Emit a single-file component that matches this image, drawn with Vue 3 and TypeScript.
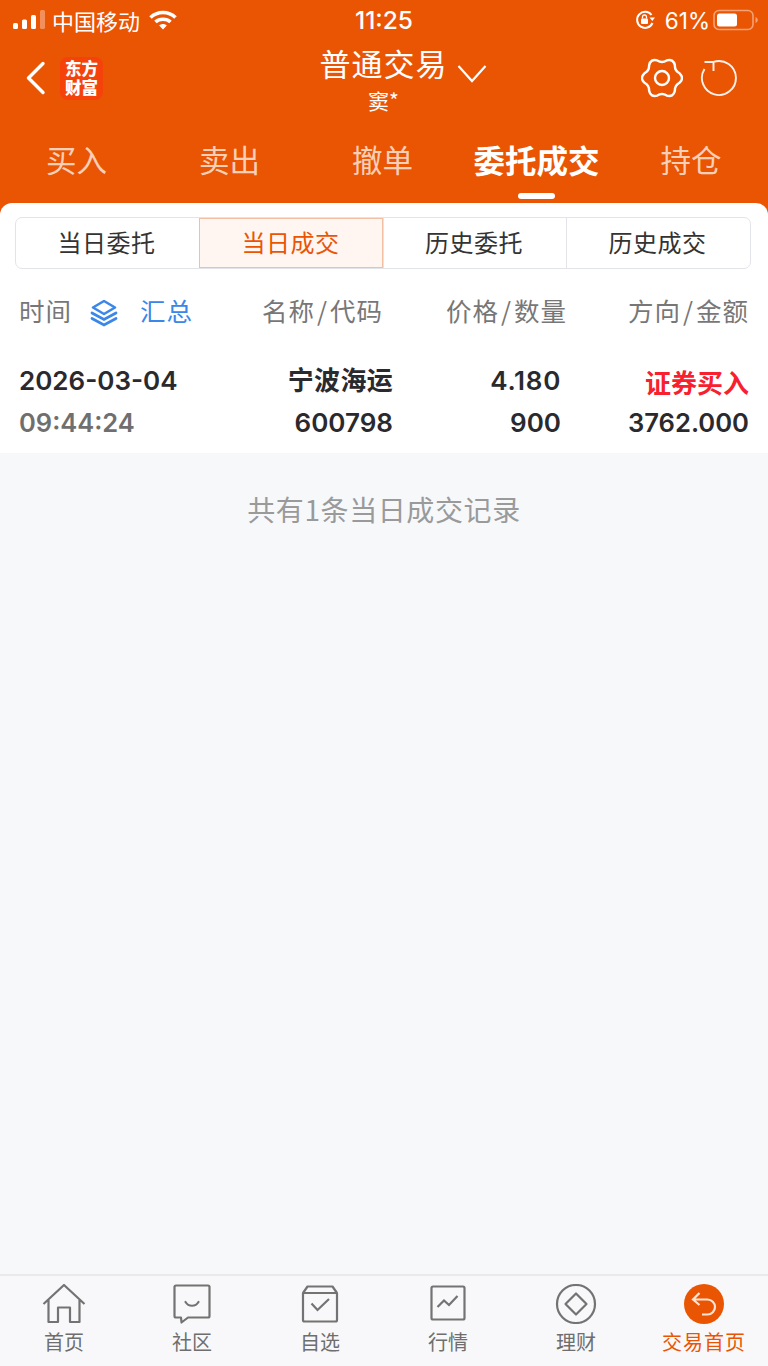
<script setup lang="ts">
const tabs = [
  { label: '买入', active: false },
  { label: '卖出', active: false },
  { label: '撤单', active: false },
  { label: '委托成交', active: true },
  { label: '持仓', active: false },
]
const segments = [
  { label: '当日委托', active: false },
  { label: '当日成交', active: true },
  { label: '历史委托', active: false },
  { label: '历史成交', active: false },
]
const heads = [
  { a: '名称', b: '代码', cls: 'c2' },
  { a: '价格', b: '数量', cls: 'c3' },
  { a: '方向', b: '金额', cls: 'c4' },
]

function polar(deg: number, r: number): string {
  const t = (deg * Math.PI) / 180
  return `${(21 + r * Math.cos(t)).toFixed(2)} ${(21 + r * Math.sin(t)).toFixed(2)}`
}
function gearPath(): string {
  let d = `M${polar(-15, 18.2)}`
  for (let i = 0; i < 6; i++) {
    const a = i * 60
    d += `Q${polar(a, 22.5)} ${polar(a + 15, 18.2)}`
    d += `Q${polar(a + 30, 14.6)} ${polar(a + 45, 18.2)}`
  }
  return d + 'Z'
}
const gear = gearPath()
</script>

<template>
  <div class="page">
    <header class="top">
      <div class="status">
        <div class="status-left">
          <svg class="signal" width="34" height="20" viewBox="0 0 34 20">
            <rect x="0" y="13" width="5" height="6" rx="1.5" fill="#fff" />
            <rect x="9" y="9.5" width="5" height="9.5" rx="1.5" fill="#fff" />
            <rect x="18" y="5" width="5" height="14" rx="1.5" fill="#fff" />
            <rect x="27" y="0" width="5" height="19" rx="1.5" fill="#fff" opacity=".35" />
          </svg>
          <span class="carrier">中国移动</span>
          <svg class="wifi" width="28" height="20" viewBox="0 0 28 20">
            <path d="M1.5 7.5C8.5 .8 19.5 .8 26.5 7.5" fill="none" stroke="#fff" stroke-width="3.6" />
            <path d="M6.5 12C10.5 8.3 17.5 8.3 21.5 12" fill="none" stroke="#fff" stroke-width="3.6" />
            <path d="M10.2 15.5C12.3 13.5 15.7 13.5 17.8 15.5L14 19.5Z" fill="#fff" />
          </svg>
        </div>
        <div class="clock">11:25</div>
        <div class="status-right">
          <svg width="22" height="22" viewBox="0 0 22 22">
            <path d="M17.5 6A8 8 0 1 0 18.5 14" fill="none" stroke="#fff" stroke-width="2" />
            <path d="M15.5 8.5h5.5l-2.7 3.5Z" fill="#fff" />
            <rect x="7" y="9.5" width="7" height="5.5" rx="1" fill="#fff" />
            <path d="M8.5 9.5V8a2 2 0 0 1 4 0v1.5" fill="none" stroke="#fff" stroke-width="1.3" />
          </svg>
          <span class="pct">61%</span>
          <svg width="46" height="22" viewBox="0 0 46 22">
            <rect x="1" y="1.5" width="39" height="19" rx="5" fill="none" stroke="#fff" stroke-opacity=".45" stroke-width="1.6" />
            <rect x="4" y="4.5" width="20" height="13" rx="2.5" fill="#fff" />
            <path d="M42.5 8v6c1.4-.5 2.3-1.6 2.3-3s-.9-2.500-2.300-3Z" fill="#fff" fill-opacity=".45" />
          </svg>
        </div>
      </div>

      <div class="nav">
        <div class="nav-left">
          <svg width="22" height="34" viewBox="0 0 22 34">
            <path d="M18 2.500 3.500 17 18 31.500" fill="none" stroke="#fff" stroke-width="3.400" stroke-linecap="round" stroke-linejoin="round" />
          </svg>
          <div class="logo"><span class="logo-text">东方财富</span></div>
        </div>
        <div class="nav-center">
          <div class="title-row">
            <span class="title">普通交易</span>
            <svg class="chev" width="30" height="20" viewBox="0 0 30 20">
              <path d="M1.500 2 15 17 28.500 2" fill="none" stroke="#fff" stroke-width="2.200" />
            </svg>
          </div>
          <div class="subtitle">窦*</div>
        </div>
        <div class="nav-right">
          <svg width="42" height="42" viewBox="0 0 42 42">
            <path :d="gear" fill="none" stroke="#fff" stroke-width="2.400" stroke-linejoin="round" />
            <circle cx="21" cy="21" r="7" fill="none" stroke="#fff" stroke-width="2.400" />
          </svg>
          <svg width="38" height="38" viewBox="0 0 38 38">
            <path d="M13.500 2.900A17 17 0 1 1 4.500 10M4.500 3H13.500V12" fill="none" stroke="#fff" stroke-opacity=".92" stroke-width="1.900" />
          </svg>
        </div>
      </div>

      <nav class="tabs">
        <div v-for="t in tabs" :key="t.label" class="tab" :class="{ on: t.active }">{{ t.label }}</div>
      </nav>
    </header>

    <section class="panel">
      <div class="seg">
        <div v-for="s in segments" :key="s.label" class="seg-item" :class="{ on: s.active }">{{ s.label }}</div>
      </div>

      <div class="grid head">
        <div class="c1">
          <span>时间</span>
          <svg class="layers" width="28" height="28" viewBox="0 0 28 28">
            <path d="M14 2 25 8.500 14 15 3 8.500Z" fill="none" stroke="#3b86e8" stroke-width="2.600" stroke-linejoin="round" />
            <path d="M2 14 14 20.500 26 14" fill="none" stroke="#3b86e8" stroke-width="2.800" stroke-linecap="round" />
            <path d="M2 19.500 14 26 26 19.500" fill="none" stroke="#3b86e8" stroke-width="2.800" stroke-linecap="round" />
          </svg>
          <span class="sum">汇总</span>
        </div>
        <div v-for="h in heads" :key="h.a" :class="h.cls">{{ h.a }}<span class="slash">/</span>{{ h.b }}</div>
      </div>

      <div class="grid row first">
        <div class="c1 num">2026-03-04</div>
        <div class="c2 name">宁波海运</div>
        <div class="c3 num price">4.180</div>
        <div class="c4 buy">证券买入</div>
      </div>
      <div class="grid row second">
        <div class="c1 num dim">09:44:24</div>
        <div class="c2 num">600798</div>
        <div class="c3 num">900</div>
        <div class="c4 num amt">3762.000</div>
      </div>
    </section>

    <main class="body">
      <p class="note">共有1条当日成交记录</p>
    </main>

    <footer class="bar">
      <div class="bar-item">
        <svg width="44" height="40" viewBox="0 0 44 40">
          <path d="M1.500 20 22 1 42.500 20M6.500 15.500V38H16V23.500H28V38H37.500V15.500" fill="none" stroke="#737373" stroke-width="2.200" stroke-linejoin="round" />
        </svg>
        <span>首页</span>
      </div>
      <div class="bar-item">
        <svg width="44" height="40" viewBox="0 0 44 40">
          <path d="M6 1.500H38Q39.500 1.500 39.500 3V32Q39.500 33.500 38 33.500H18L11.500 38.500 11 33.500H6Q4.500 33.500 4.500 32V3Q4.500 1.500 6 1.500Z" fill="none" stroke="#737373" stroke-width="2.200" stroke-linejoin="round" />
          <path d="M15.500 18C18.500 23 25.500 23 28.500 18" fill="none" stroke="#737373" stroke-width="2.200" stroke-linecap="round" />
        </svg>
        <span>社区</span>
      </div>
      <div class="bar-item">
        <svg width="44" height="40" viewBox="0 0 44 40">
          <path d="M5 9 9.500 2.500H34.500L39 9M5 9H39V36Q39 37.500 37.500 37.500H6.500Q5 37.500 5 36Z" fill="none" stroke="#737373" stroke-width="2.200" stroke-linejoin="round" />
          <path d="M13.500 19.500 19.500 26 31 15" fill="none" stroke="#737373" stroke-width="2.200" />
        </svg>
        <span>自选</span>
      </div>
      <div class="bar-item">
        <svg width="44" height="40" viewBox="0 0 44 40">
          <rect x="5.500" y="2.500" width="33" height="33" rx="1.500" fill="none" stroke="#737373" stroke-width="2.200" />
          <path d="M11.500 23 18 16.500 23 21 31.500 12" fill="none" stroke="#737373" stroke-width="2.200" />
        </svg>
        <span>行情</span>
      </div>
      <div class="bar-item">
        <svg width="44" height="40" viewBox="0 0 44 40">
          <circle cx="22" cy="20" r="19" fill="none" stroke="#737373" stroke-width="2.200" />
          <path d="M22 9.500 32.500 20 22 30.500 11.500 20Z" fill="none" stroke="#737373" stroke-width="2.200" stroke-linejoin="round" />
        </svg>
        <span>理财</span>
      </div>
      <div class="bar-item on">
        <svg width="44" height="40" viewBox="0 0 44 40">
          <circle cx="22" cy="20" r="20" fill="#ea5504" />
          <path d="M11 15.500H25.500A7.500 7.500 0 0 1 25.500 30.500H20M17.500 9 11 15.500 17.500 21" fill="none" stroke="#ffe3d4" stroke-width="2.200" />
        </svg>
        <span>交易首页</span>
      </div>
    </footer>
  </div>
</template>

<style>
html, body { margin: 0; background: #f7f8fa; }
</style>

<style scoped>
.page {
  width: 768px;
  height: 1366px;
  display: flex;
  flex-direction: column;
  overflow: hidden;
  background: #f7f8fa;
  font-family: "Noto Sans CJK SC", "Noto Sans", sans-serif;
}
.top {
  height: 215px;
  flex: none;
  background: #ea5504;
  color: #fff;
}
.status {
  height: 40px;
  display: grid;
  grid-template-columns: 1fr auto 1fr;
  align-items: center;
  padding: 0 11px;
}
.status-left { display: flex; align-items: center; padding-left: 2px; }
.signal { margin-right: 5px; }
.carrier { font-size: 22px; line-height: 28px; }
.wifi { margin-left: 9px; }
.clock { font-family: Inter, sans-serif; font-size: 24.500px; font-weight: 500; }
.status-right { display: flex; align-items: center; justify-content: flex-end; gap: 7px; margin-right: -2px; }
.pct { font-family: Inter, sans-serif; font-size: 22.500px; margin: 0 -4px 0 2px; }
.nav {
  height: 76px;
  display: grid;
  grid-template-columns: 1fr auto 1fr;
  align-items: center;
  padding: 0 30px 0 25px;
}
.nav-left { display: flex; align-items: center; gap: 13px; }
.logo {
  width: 43px;
  height: 43px;
  border-radius: 8px;
  background: #f5420a;
  display: flex;
  align-items: center;
  justify-content: center;
}
.logo-text {
  display: block;
  width: 34px;
  text-align: center;
  font-size: 16.500px;
  font-weight: 900;
  line-height: 19px;
}
.nav-center {
  align-self: start;
  padding-top: 0.5px;
  display: flex;
  flex-direction: column;
  align-items: center;
}
.title-row { display: flex; align-items: center; padding-left: 43px; height: 44px; }
.title { font-size: 31px; line-height: 44px; letter-spacing: 1px; }
.chev { margin: 23px 0 0 9px; }
.subtitle { font-size: 21px; line-height: 26px; padding: 2.500px 0 0 4px; }
.nav-right { display: flex; justify-content: flex-end; align-items: center; gap: 17px; }
.tabs {
  height: 87px;
  display: grid;
  grid-template-columns: 153px 153px 153px 155px 154px;
}
.tab {
  position: relative;
  text-align: center;
  font-size: 30.500px;
  line-height: 86px;
  color: rgba(255, 255, 255, 0.72);
}
.tab.on { color: #fff; font-weight: 700; font-size: 31.500px; }
.tab.on::after {
  content: "";
  position: absolute;
  left: 50%;
  bottom: 4px;
  width: 37px;
  height: 6px;
  margin-left: -18.500px;
  border-radius: 3px;
  background: #fff;
}
.panel {
  margin-top: -12px;
  height: 250px;
  flex: none;
  background: #fff;
  border-radius: 12px 12px 0 0;
  padding: 14px 15px 0;
  box-sizing: border-box;
  position: relative;
}
.seg {
  display: grid;
  grid-template-columns: 183px 184px 183px 1fr;
  width: 736px;
  height: 52px;
  box-sizing: border-box;
  border: 1px solid #e3e4e9;
  border-radius: 7px;
  overflow: hidden;
}
.seg-item {
  text-align: center;
  font-size: 24px;
  letter-spacing: 0.5px;
  line-height: 48px;
  padding-right: 2px;
  color: #333;
  border-left: 1px solid #e3e4e9;
}
.seg-item:first-child { border-left: 0; }
.seg-item.on {
  color: #ea5504;
  background: #fff6f2;
  border-left-color: #f2bfa2;
  box-shadow: inset 0 1px 0 #f2bfa2, inset 0 -1px 0 #f2bfa2, inset -1px 0 0 #f2bfa2;
}
.grid {
  display: grid;
  grid-template-columns: 228px 146px 168px 188px;
  padding-left: 4px;
  align-items: center;
}
.c2, .c3, .c4 { text-align: right; }
.head {
  grid-template-columns: 228px 136px 184px 182px;
  height: 84px;
  box-sizing: border-box;
  padding-bottom: 4px;
  font-size: 25.500px;
  letter-spacing: 1px;
  color: #777;
}
.slash { margin: 0 2px; }
.c1 { display: flex; align-items: center; }
.layers { margin: 7px 0 0 18px; }
.sum { color: #3b86e8; margin-left: 22px; }
.row { font-size: 26px; color: #2a2a2e; }
.first { height: 42px; margin-top: 6px; }
.second { height: 42px; }
.num {
  font-family: Inter, sans-serif;
  font-weight: 600;
  font-size: 26px;
}
.price { letter-spacing: 0.7px; }
.dim { color: #6f6f6f; font-size: 25.500px; }
.amt { font-size: 25.600px; }
.name { font-weight: 600; letter-spacing: 0.3px; padding-bottom: 4px; }
.buy { color: #f8202e; font-weight: 700; padding-top: 3px; }
.body { flex: 1; }
.note {
  margin: 36px 0 0;
  text-align: center;
  font-size: 28px;
  letter-spacing: 0.6px;
  line-height: 40px;
  color: #9a9a9a;
}
.bar {
  height: 92px;
  flex: none;
  box-sizing: border-box;
  border-top: 2px solid #e9e9ec;
  background: #f8f8fa;
  display: grid;
  grid-template-columns: repeat(6, 128px);
  padding-top: 8px;
}
.bar-item {
  display: flex;
  flex-direction: column;
  align-items: center;
  font-size: 20px;
  line-height: 28px;
  color: #6e6e6e;
  gap: 4px;
}
.bar-item.on { color: #ea5504; letter-spacing: 1px; }
</style>
